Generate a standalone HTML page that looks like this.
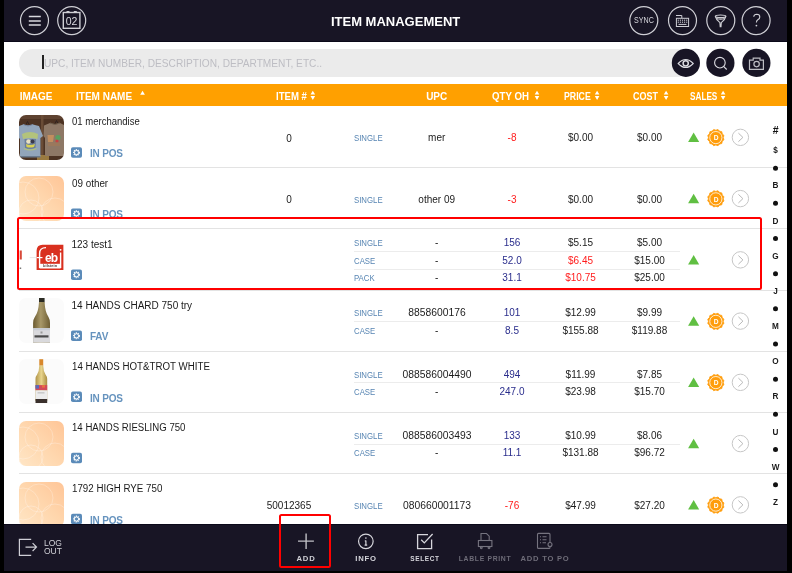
<!DOCTYPE html><html><head><meta charset="utf-8"><style>
*{margin:0;padding:0;box-sizing:border-box}
html,body{width:792px;height:573px;overflow:hidden;background:#000}
body{position:relative;font-family:"Liberation Sans",sans-serif}
.t{position:absolute;line-height:1;white-space:nowrap}
.a{position:absolute}
.sep{position:absolute;height:1px;background:#e3e3e3}
.thumb{position:absolute;left:19px;width:45px;height:45px;border-radius:7px;overflow:hidden}
.peach{background:linear-gradient(225deg,#ffc597 0%,#ffd7ae 50%,#ffe6c6 100%)}
svg.ov{position:absolute;left:0;top:0}
#wrap{position:absolute;left:0;top:0;width:792px;height:573px;will-change:transform}
</style></head><body><div id="wrap">
<div class="a" style="left:4px;top:0;width:783px;height:42px;background:#181525"></div>
<div class="a" style="left:4px;top:41px;width:783px;height:1px;background:#0b0919"></div>
<div class="a" style="left:4px;top:42px;width:783px;height:42px;background:#fff"></div>
<div class="a" style="left:4px;top:84px;width:783px;height:22px;background:#ffa000"></div>
<div class="a" style="left:4px;top:106px;width:783px;height:418px;background:#fff"></div>
<div class="t" style="left:-78.4px;width:300px;text-align:center;top:15.77px;font-size:10.5px;color:#dcdce2;font-weight:400;letter-spacing:0px;">02</div>
<div class="t" style="left:245.60000000000002px;width:300px;text-align:center;top:14.85px;font-size:13px;color:#fff;font-weight:700;letter-spacing:0px;">ITEM MANAGEMENT</div>
<div class="t" style="left:493.79999999999995px;width:300px;text-align:center;top:16.05px;font-size:8.3px;color:#d8d8de;font-weight:400;letter-spacing:0px;transform:scaleX(0.86);transform-origin:center center;">SYNC</div>
<div class="a" style="left:19px;top:49px;width:672px;height:28px;border-radius:14px;background:#ebebeb"></div>
<div class="a" style="left:42px;top:55px;width:2px;height:14px;background:#222"></div>
<div class="t" style="left:43.5px;top:59.07px;font-size:10.1px;color:#bdbdc3;font-weight:400;letter-spacing:0px;transform:scaleX(1.005);transform-origin:left center;">UPC, ITEM NUMBER, DESCRIPTION, DEPARTMENT, ETC..</div>
<div class="t" style="left:19.7px;top:91.61px;font-size:10px;color:#fff;font-weight:700;letter-spacing:0px;">IMAGE</div>
<div class="t" style="left:76px;top:91.61px;font-size:10px;color:#fff;font-weight:700;letter-spacing:0px;">ITEM NAME</div>
<div class="t" style="left:275.7px;top:91.61px;font-size:10px;color:#fff;font-weight:700;letter-spacing:0px;transform:scaleX(0.96);transform-origin:left center;">ITEM #</div>
<div class="t" style="left:286.7px;width:300px;text-align:center;top:91.61px;font-size:10px;color:#fff;font-weight:700;letter-spacing:0px;">UPC</div>
<div class="t" style="left:491.5px;top:91.61px;font-size:10px;color:#fff;font-weight:700;letter-spacing:0px;transform:scaleX(0.967);transform-origin:left center;">QTY OH</div>
<div class="t" style="left:563.9px;top:91.61px;font-size:10px;color:#fff;font-weight:700;letter-spacing:0px;transform:scaleX(0.874);transform-origin:left center;">PRICE</div>
<div class="t" style="left:633px;top:91.61px;font-size:10px;color:#fff;font-weight:700;letter-spacing:0px;transform:scaleX(0.9);transform-origin:left center;">COST</div>
<div class="t" style="left:689.6px;top:91.61px;font-size:10px;color:#fff;font-weight:700;letter-spacing:0px;transform:scaleX(0.82);transform-origin:left center;">SALES</div>
<div class="thumb" style="top:115.10px"><div style="filter:blur(0.45px)"><svg width="45" height="45" viewBox="0 0 45 45">
<rect width="45" height="45" fill="#4d3323"/>
<rect x="0" y="0" width="45" height="4" fill="#5e4230"/>
<rect x="22" y="0" width="2.5" height="45" fill="#6a4c36"/>
<rect x="18" y="40" width="12" height="5" fill="#9a7a40"/>
<path d="M7 9.5 L8.5 6.5 L10 9.5" fill="none" stroke="#2a2020" stroke-width="0.8"/>
<path d="M36 8.5 L37.5 5.5 L39 8.5" fill="none" stroke="#2a2020" stroke-width="0.8"/>
<path d="M0 11 L4 9.5 Q9 11.5 14 9.5 L20 11 L24 21 L21.5 23 V41.5 H1 V24 L0 23 Z" fill="#92a5bb"/>
<path d="M4 9.5 Q9 12.5 14 9.5" fill="none" stroke="#7a8ca8" stroke-width="1"/>
<path d="M2 41 H21.5 V42.5 H2 Z" fill="#6a7a8e"/>
<path d="M3 19 Q11 15 19 19 L18.5 24 Q11 22 4 24 Z" fill="#b8c870" opacity="0.85"/>
<path d="M5.5 24 L17 24 L16.5 33 Q11 35 6 33 Z" fill="#6d7f9c"/>
<circle cx="9.5" cy="26.5" r="2.3" fill="#e8e0c0"/>
<circle cx="13.5" cy="26.5" r="2" fill="#3a3a4a"/>
<path d="M7 29 Q11 31 16 29 L15 32 Q11 33 7.5 32 Z" fill="#d8d050"/>
<path d="M5 33.5 Q11 36.5 17.5 33.5" fill="none" stroke="#b8c870" stroke-width="1.2" opacity="0.8"/>
<path d="M25 10.5 L31 8 Q36 10.5 41 8 L45 10 V41 H26 V23 L24.5 21 Z" fill="#8e7866"/>
<path d="M31 8 Q36 11 41 8" fill="none" stroke="#70604e" stroke-width="1"/>
<path d="M28.5 20 L35 20 L34 27 L29 27 Z" fill="#c8905e" opacity="0.9"/>
<circle cx="39" cy="22.5" r="2.6" fill="#5aa060"/>
<circle cx="38" cy="26" r="1.6" fill="#c84040"/>
<path d="M29 27.5 H41 V31 H29 Z" fill="#a07858" opacity="0.7"/>
</svg></div></div>
<div class="t" style="left:71.5px;top:117.46px;font-size:10px;color:#1b1b1b;font-weight:400;letter-spacing:0px;transform:scaleX(0.952);transform-origin:left center;">01 merchandise</div>
<div class="t" style="left:90px;top:149.22px;font-size:10px;color:#6693be;font-weight:700;letter-spacing:-0.2px;">IN POS</div>
<div class="t" style="left:139px;width:300px;text-align:center;top:133.72px;font-size:10px;color:#1b1b1b;font-weight:400;letter-spacing:0px;">0</div>
<div class="t" style="left:354.2px;top:134.30px;font-size:8.3px;color:#5785b3;font-weight:400;letter-spacing:0px;transform:scaleX(0.94);transform-origin:left center;">SINGLE</div>
<div class="t" style="left:286.7px;width:300px;text-align:center;top:133.47px;font-size:10px;color:#1b1b1b;font-weight:400;letter-spacing:0px;">mer</div>
<div class="t" style="left:362px;width:300px;text-align:center;top:133.47px;font-size:10px;color:#ff1c1c;font-weight:400;letter-spacing:0px;">-8</div>
<div class="t" style="left:430.5px;width:300px;text-align:center;top:133.47px;font-size:10px;color:#1b1b1b;font-weight:400;letter-spacing:0px;">$0.00</div>
<div class="t" style="left:499.5px;width:300px;text-align:center;top:133.47px;font-size:10px;color:#1b1b1b;font-weight:400;letter-spacing:0px;">$0.00</div>
<div class="sep" style="left:19px;top:167.00px;width:768px"></div>
<div class="thumb peach" style="top:176.18px"><svg width="45" height="45" viewBox="0 0 45 45" fill="none" stroke="rgba(255,255,255,0.55)" stroke-width="0.5"><circle cx="20" cy="16" r="14"/><circle cx="36" cy="36" r="14"/><circle cx="12" cy="36" r="12"/><circle cx="4" cy="22" r="16"/></svg></div>
<div class="t" style="left:71.5px;top:178.55px;font-size:10px;color:#1b1b1b;font-weight:400;letter-spacing:0px;transform:scaleX(0.985);transform-origin:left center;">09 other</div>
<div class="t" style="left:90px;top:210.30px;font-size:10px;color:#6693be;font-weight:700;letter-spacing:-0.2px;">IN POS</div>
<div class="t" style="left:139px;width:300px;text-align:center;top:194.97px;font-size:10px;color:#1b1b1b;font-weight:400;letter-spacing:0px;">0</div>
<div class="t" style="left:354.2px;top:195.55px;font-size:8.3px;color:#5785b3;font-weight:400;letter-spacing:0px;transform:scaleX(0.94);transform-origin:left center;">SINGLE</div>
<div class="t" style="left:286.7px;width:300px;text-align:center;top:194.72px;font-size:10px;color:#1b1b1b;font-weight:400;letter-spacing:0px;">other 09</div>
<div class="t" style="left:362px;width:300px;text-align:center;top:194.72px;font-size:10px;color:#ff1c1c;font-weight:400;letter-spacing:0px;">-3</div>
<div class="t" style="left:430.5px;width:300px;text-align:center;top:194.72px;font-size:10px;color:#1b1b1b;font-weight:400;letter-spacing:0px;">$0.00</div>
<div class="t" style="left:499.5px;width:300px;text-align:center;top:194.72px;font-size:10px;color:#1b1b1b;font-weight:400;letter-spacing:0px;">$0.00</div>
<div class="sep" style="left:19px;top:228.25px;width:768px"></div>
<div class="thumb" style="top:237.26px;border-radius:0"><svg width="45" height="45" viewBox="0 0 45 45">
<rect width="45" height="45" fill="#fff"/>
<rect x="0.7" y="13.5" width="2.1" height="9" fill="#d84a3a"/>
<rect x="0.7" y="30.5" width="1.5" height="1.5" fill="#777"/>
<path d="M10.7 20.6 H19" stroke="#dcdcdc" stroke-width="0.7"/>
<path d="M23.6 7.85 H44.4 V33 H17.6 V13.85 Q17.6 7.85 23.6 7.85 Z" fill="#d9301f"/>
<path d="M20.6 31 V16.5 Q20.6 10.6 27 10.6" fill="none" stroke="#fff" stroke-width="1.4"/>
<path d="M17.6 20.6 H23.5" stroke="#fff" stroke-width="1.2"/>
<text x="32.2" y="24.6" font-family="Liberation Sans" font-weight="700" font-size="12" fill="#fff" text-anchor="middle" letter-spacing="-0.8">eb</text>
<path d="M41.6 15.5 V31" stroke="#fff" stroke-width="1.4"/>
<circle cx="41.6" cy="12.8" r="0.9" fill="#fff"/>
<rect x="20.6" y="26.8" width="21" height="4.2" fill="#fff"/>
<text x="31.1" y="30.3" font-family="Liberation Sans" font-weight="700" font-size="4" fill="#5a4040" text-anchor="middle">bilstein</text>
<path d="M20.6 31 H41.6" stroke="#fff" stroke-width="1"/>
</svg></div>
<div class="t" style="left:71.5px;top:239.62px;font-size:10px;color:#1b1b1b;font-weight:400;letter-spacing:0px;transform:scaleX(1.0);transform-origin:left center;">123 test1</div>
<div class="t" style="left:354.2px;top:239.30px;font-size:8.3px;color:#5785b3;font-weight:400;letter-spacing:0px;transform:scaleX(0.94);transform-origin:left center;">SINGLE</div>
<div class="t" style="left:286.7px;width:300px;text-align:center;top:238.47px;font-size:10px;color:#1b1b1b;font-weight:400;letter-spacing:0px;">-</div>
<div class="t" style="left:362px;width:300px;text-align:center;top:238.47px;font-size:10px;color:#2a2d8c;font-weight:400;letter-spacing:0px;">156</div>
<div class="t" style="left:430.5px;width:300px;text-align:center;top:238.47px;font-size:10px;color:#1b1b1b;font-weight:400;letter-spacing:0px;">$5.15</div>
<div class="t" style="left:499.5px;width:300px;text-align:center;top:238.47px;font-size:10px;color:#1b1b1b;font-weight:400;letter-spacing:0px;">$5.00</div>
<div class="t" style="left:354.2px;top:256.80px;font-size:8.3px;color:#5785b3;font-weight:400;letter-spacing:0px;transform:scaleX(0.94);transform-origin:left center;">CASE</div>
<div class="t" style="left:286.7px;width:300px;text-align:center;top:255.97px;font-size:10px;color:#1b1b1b;font-weight:400;letter-spacing:0px;">-</div>
<div class="t" style="left:362px;width:300px;text-align:center;top:255.97px;font-size:10px;color:#2a2d8c;font-weight:400;letter-spacing:0px;">52.0</div>
<div class="t" style="left:430.5px;width:300px;text-align:center;top:255.97px;font-size:10px;color:#ff1c1c;font-weight:400;letter-spacing:0px;">$6.45</div>
<div class="t" style="left:499.5px;width:300px;text-align:center;top:255.97px;font-size:10px;color:#1b1b1b;font-weight:400;letter-spacing:0px;">$15.00</div>
<div class="t" style="left:354.2px;top:274.30px;font-size:8.3px;color:#5785b3;font-weight:400;letter-spacing:0px;transform:scaleX(0.94);transform-origin:left center;">PACK</div>
<div class="t" style="left:286.7px;width:300px;text-align:center;top:273.47px;font-size:10px;color:#1b1b1b;font-weight:400;letter-spacing:0px;">-</div>
<div class="t" style="left:362px;width:300px;text-align:center;top:273.47px;font-size:10px;color:#2a2d8c;font-weight:400;letter-spacing:0px;">31.1</div>
<div class="t" style="left:430.5px;width:300px;text-align:center;top:273.47px;font-size:10px;color:#ff1c1c;font-weight:400;letter-spacing:0px;">$10.75</div>
<div class="t" style="left:499.5px;width:300px;text-align:center;top:273.47px;font-size:10px;color:#1b1b1b;font-weight:400;letter-spacing:0px;">$25.00</div>
<div class="sep" style="left:354px;top:251.00px;width:326px;background:#ececec"></div>
<div class="sep" style="left:354px;top:268.50px;width:326px;background:#ececec"></div>
<div class="sep" style="left:19px;top:289.50px;width:768px"></div>
<div class="thumb" style="top:298.34px"><svg width="45" height="45" viewBox="0 0 45 45">
<rect width="45" height="45" fill="#fbfbfb"/>
<defs><linearGradient id="b1" x1="0" x2="1"><stop offset="0" stop-color="#6a5a30"/><stop offset="0.45" stop-color="#a89868"/><stop offset="1" stop-color="#6e5e34"/></linearGradient></defs>
<rect x="20" y="0" width="5.6" height="4.3" fill="#2b2b24"/>
<path d="M20 4 H25.6 Q26 14 29.5 19 Q31 21.5 31 25 V44.5 H14.1 V25 Q14.1 21.5 15.8 19 Q19.5 14 20 4 Z" fill="url(#b1)"/>
<rect x="14.1" y="30.2" width="16.9" height="14.3" fill="#d9d9dc"/>
<rect x="14.1" y="30.2" width="16.9" height="2" fill="#c8ccd4"/>
<rect x="15.5" y="37.3" width="14" height="2.2" fill="#4a4a4a"/>
<rect x="21.5" y="33.5" width="2" height="2" fill="#999"/>
</svg></div>
<div class="t" style="left:71.5px;top:300.71px;font-size:10px;color:#1b1b1b;font-weight:400;letter-spacing:0px;transform:scaleX(1.0);transform-origin:left center;">14 HANDS CHARD 750 try</div>
<div class="t" style="left:90px;top:332.46px;font-size:10px;color:#6693be;font-weight:700;letter-spacing:-0.2px;">FAV</div>
<div class="t" style="left:354.2px;top:309.30px;font-size:8.3px;color:#5785b3;font-weight:400;letter-spacing:0px;transform:scaleX(0.94);transform-origin:left center;">SINGLE</div>
<div class="t" style="left:286.7px;width:300px;text-align:center;top:308.47px;font-size:10px;color:#1b1b1b;font-weight:400;letter-spacing:0px;transform:scaleX(1.03);transform-origin:center center;">8858600176</div>
<div class="t" style="left:362px;width:300px;text-align:center;top:308.47px;font-size:10px;color:#2a2d8c;font-weight:400;letter-spacing:0px;">101</div>
<div class="t" style="left:430.5px;width:300px;text-align:center;top:308.47px;font-size:10px;color:#1b1b1b;font-weight:400;letter-spacing:0px;">$12.99</div>
<div class="t" style="left:499.5px;width:300px;text-align:center;top:308.47px;font-size:10px;color:#1b1b1b;font-weight:400;letter-spacing:0px;">$9.99</div>
<div class="t" style="left:354.2px;top:326.80px;font-size:8.3px;color:#5785b3;font-weight:400;letter-spacing:0px;transform:scaleX(0.94);transform-origin:left center;">CASE</div>
<div class="t" style="left:286.7px;width:300px;text-align:center;top:325.97px;font-size:10px;color:#1b1b1b;font-weight:400;letter-spacing:0px;">-</div>
<div class="t" style="left:362px;width:300px;text-align:center;top:325.97px;font-size:10px;color:#2a2d8c;font-weight:400;letter-spacing:0px;">8.5</div>
<div class="t" style="left:430.5px;width:300px;text-align:center;top:325.97px;font-size:10px;color:#1b1b1b;font-weight:400;letter-spacing:0px;">$155.88</div>
<div class="t" style="left:499.5px;width:300px;text-align:center;top:325.97px;font-size:10px;color:#1b1b1b;font-weight:400;letter-spacing:0px;">$119.88</div>
<div class="sep" style="left:354px;top:321.00px;width:326px;background:#ececec"></div>
<div class="sep" style="left:19px;top:350.75px;width:768px"></div>
<div class="thumb" style="top:359.42px"><svg width="45" height="45" viewBox="0 0 45 45">
<rect width="45" height="45" fill="#fbfbfb"/>
<defs><linearGradient id="b2" x1="0" x2="1"><stop offset="0" stop-color="#b09448"/><stop offset="0.5" stop-color="#e8d48c"/><stop offset="1" stop-color="#a88c40"/></linearGradient></defs>
<rect x="20.3" y="0.2" width="3.9" height="6.5" fill="#d8882c"/>
<path d="M20.3 6.5 H24.2 Q24.4 12 26.5 15.5 Q28.2 17.5 28.2 20 V42 H16.5 V20 Q16.5 17.5 18.1 15.5 Q20.2 12 20.3 6.5 Z" fill="url(#b2)"/>
<rect x="16.5" y="26.1" width="11.7" height="5.2" fill="#d24a5a"/>
<rect x="16.5" y="26.1" width="3.5" height="3.5" fill="#5a6ab8"/>
<rect x="23" y="26.1" width="3" height="2.5" fill="#e87040"/>
<rect x="16.5" y="31.3" width="11.7" height="8.7" fill="#ececec"/>
<rect x="18.5" y="33.5" width="7" height="0.8" fill="#aaa"/>
<rect x="16.5" y="40" width="11.7" height="4" fill="#3a302c"/>
</svg></div>
<div class="t" style="left:71.5px;top:361.79px;font-size:10px;color:#1b1b1b;font-weight:400;letter-spacing:0px;transform:scaleX(0.975);transform-origin:left center;">14 HANDS HOT&amp;TROT WHITE</div>
<div class="t" style="left:90px;top:393.54px;font-size:10px;color:#6693be;font-weight:700;letter-spacing:-0.2px;">IN POS</div>
<div class="t" style="left:354.2px;top:370.55px;font-size:8.3px;color:#5785b3;font-weight:400;letter-spacing:0px;transform:scaleX(0.94);transform-origin:left center;">SINGLE</div>
<div class="t" style="left:286.7px;width:300px;text-align:center;top:369.72px;font-size:10px;color:#1b1b1b;font-weight:400;letter-spacing:0px;transform:scaleX(1.03);transform-origin:center center;">088586004490</div>
<div class="t" style="left:362px;width:300px;text-align:center;top:369.72px;font-size:10px;color:#2a2d8c;font-weight:400;letter-spacing:0px;">494</div>
<div class="t" style="left:430.5px;width:300px;text-align:center;top:369.72px;font-size:10px;color:#1b1b1b;font-weight:400;letter-spacing:0px;">$11.99</div>
<div class="t" style="left:499.5px;width:300px;text-align:center;top:369.72px;font-size:10px;color:#1b1b1b;font-weight:400;letter-spacing:0px;">$7.85</div>
<div class="t" style="left:354.2px;top:388.05px;font-size:8.3px;color:#5785b3;font-weight:400;letter-spacing:0px;transform:scaleX(0.94);transform-origin:left center;">CASE</div>
<div class="t" style="left:286.7px;width:300px;text-align:center;top:387.22px;font-size:10px;color:#1b1b1b;font-weight:400;letter-spacing:0px;">-</div>
<div class="t" style="left:362px;width:300px;text-align:center;top:387.22px;font-size:10px;color:#2a2d8c;font-weight:400;letter-spacing:0px;">247.0</div>
<div class="t" style="left:430.5px;width:300px;text-align:center;top:387.22px;font-size:10px;color:#1b1b1b;font-weight:400;letter-spacing:0px;">$23.98</div>
<div class="t" style="left:499.5px;width:300px;text-align:center;top:387.22px;font-size:10px;color:#1b1b1b;font-weight:400;letter-spacing:0px;">$15.70</div>
<div class="sep" style="left:354px;top:382.25px;width:326px;background:#ececec"></div>
<div class="sep" style="left:19px;top:412.00px;width:768px"></div>
<div class="thumb peach" style="top:420.50px"><svg width="45" height="45" viewBox="0 0 45 45" fill="none" stroke="rgba(255,255,255,0.55)" stroke-width="0.5"><circle cx="20" cy="16" r="14"/><circle cx="36" cy="36" r="14"/><circle cx="12" cy="36" r="12"/><circle cx="4" cy="22" r="16"/></svg></div>
<div class="t" style="left:71.5px;top:422.87px;font-size:10px;color:#1b1b1b;font-weight:400;letter-spacing:0px;transform:scaleX(0.963);transform-origin:left center;">14 HANDS RIESLING 750</div>
<div class="t" style="left:354.2px;top:431.80px;font-size:8.3px;color:#5785b3;font-weight:400;letter-spacing:0px;transform:scaleX(0.94);transform-origin:left center;">SINGLE</div>
<div class="t" style="left:286.7px;width:300px;text-align:center;top:430.97px;font-size:10px;color:#1b1b1b;font-weight:400;letter-spacing:0px;transform:scaleX(1.03);transform-origin:center center;">088586003493</div>
<div class="t" style="left:362px;width:300px;text-align:center;top:430.97px;font-size:10px;color:#2a2d8c;font-weight:400;letter-spacing:0px;">133</div>
<div class="t" style="left:430.5px;width:300px;text-align:center;top:430.97px;font-size:10px;color:#1b1b1b;font-weight:400;letter-spacing:0px;">$10.99</div>
<div class="t" style="left:499.5px;width:300px;text-align:center;top:430.97px;font-size:10px;color:#1b1b1b;font-weight:400;letter-spacing:0px;">$8.06</div>
<div class="t" style="left:354.2px;top:449.30px;font-size:8.3px;color:#5785b3;font-weight:400;letter-spacing:0px;transform:scaleX(0.94);transform-origin:left center;">CASE</div>
<div class="t" style="left:286.7px;width:300px;text-align:center;top:448.47px;font-size:10px;color:#1b1b1b;font-weight:400;letter-spacing:0px;">-</div>
<div class="t" style="left:362px;width:300px;text-align:center;top:448.47px;font-size:10px;color:#2a2d8c;font-weight:400;letter-spacing:0px;">11.1</div>
<div class="t" style="left:430.5px;width:300px;text-align:center;top:448.47px;font-size:10px;color:#1b1b1b;font-weight:400;letter-spacing:0px;">$131.88</div>
<div class="t" style="left:499.5px;width:300px;text-align:center;top:448.47px;font-size:10px;color:#1b1b1b;font-weight:400;letter-spacing:0px;">$96.72</div>
<div class="sep" style="left:354px;top:443.50px;width:326px;background:#ececec"></div>
<div class="sep" style="left:19px;top:473.25px;width:768px"></div>
<div class="thumb peach" style="top:481.58px"><svg width="45" height="45" viewBox="0 0 45 45" fill="none" stroke="rgba(255,255,255,0.55)" stroke-width="0.5"><circle cx="20" cy="16" r="14"/><circle cx="36" cy="36" r="14"/><circle cx="12" cy="36" r="12"/><circle cx="4" cy="22" r="16"/></svg></div>
<div class="t" style="left:71.5px;top:483.95px;font-size:10px;color:#1b1b1b;font-weight:400;letter-spacing:0px;transform:scaleX(0.975);transform-origin:left center;">1792 HIGH RYE 750</div>
<div class="t" style="left:90px;top:515.70px;font-size:10px;color:#6693be;font-weight:700;letter-spacing:-0.2px;">IN POS</div>
<div class="t" style="left:139px;width:300px;text-align:center;top:501.22px;font-size:10px;color:#1b1b1b;font-weight:400;letter-spacing:0px;">50012365</div>
<div class="t" style="left:354.2px;top:501.80px;font-size:8.3px;color:#5785b3;font-weight:400;letter-spacing:0px;transform:scaleX(0.94);transform-origin:left center;">SINGLE</div>
<div class="t" style="left:286.7px;width:300px;text-align:center;top:500.97px;font-size:10px;color:#1b1b1b;font-weight:400;letter-spacing:0px;transform:scaleX(1.03);transform-origin:center center;">080660001173</div>
<div class="t" style="left:362px;width:300px;text-align:center;top:500.97px;font-size:10px;color:#ff1c1c;font-weight:400;letter-spacing:0px;">-76</div>
<div class="t" style="left:430.5px;width:300px;text-align:center;top:500.97px;font-size:10px;color:#1b1b1b;font-weight:400;letter-spacing:0px;">$47.99</div>
<div class="t" style="left:499.5px;width:300px;text-align:center;top:500.97px;font-size:10px;color:#1b1b1b;font-weight:400;letter-spacing:0px;">$27.20</div>
<div class="sep" style="left:19px;top:534.50px;width:768px"></div>
<div class="t" style="left:625.6px;width:300px;text-align:center;top:125.27px;font-size:10.5px;color:#111;font-weight:700;letter-spacing:0px;">#</div>
<div class="t" style="left:625.5px;width:300px;text-align:center;top:147.31px;font-size:8.2px;color:#1a1a1a;font-weight:700;letter-spacing:0px;">$</div>
<div class="t" style="left:625.5px;width:300px;text-align:center;top:182.47px;font-size:8.2px;color:#1a1a1a;font-weight:700;letter-spacing:0px;">B</div>
<div class="t" style="left:625.5px;width:300px;text-align:center;top:217.63px;font-size:8.2px;color:#1a1a1a;font-weight:700;letter-spacing:0px;">D</div>
<div class="t" style="left:625.5px;width:300px;text-align:center;top:252.79px;font-size:8.2px;color:#1a1a1a;font-weight:700;letter-spacing:0px;">G</div>
<div class="t" style="left:625.5px;width:300px;text-align:center;top:287.95px;font-size:8.2px;color:#1a1a1a;font-weight:700;letter-spacing:0px;">J</div>
<div class="t" style="left:625.5px;width:300px;text-align:center;top:323.11px;font-size:8.2px;color:#1a1a1a;font-weight:700;letter-spacing:0px;">M</div>
<div class="t" style="left:625.5px;width:300px;text-align:center;top:358.27px;font-size:8.2px;color:#1a1a1a;font-weight:700;letter-spacing:0px;">O</div>
<div class="t" style="left:625.5px;width:300px;text-align:center;top:393.43px;font-size:8.2px;color:#1a1a1a;font-weight:700;letter-spacing:0px;">R</div>
<div class="t" style="left:625.5px;width:300px;text-align:center;top:428.59px;font-size:8.2px;color:#1a1a1a;font-weight:700;letter-spacing:0px;">U</div>
<div class="t" style="left:625.5px;width:300px;text-align:center;top:463.75px;font-size:8.2px;color:#1a1a1a;font-weight:700;letter-spacing:0px;">W</div>
<div class="t" style="left:625.5px;width:300px;text-align:center;top:498.91px;font-size:8.2px;color:#1a1a1a;font-weight:700;letter-spacing:0px;">Z</div>
<svg class="ov" width="792" height="573" viewBox="0 0 792 573"><circle cx="34.5" cy="20.6" r="14" fill="none" stroke="#cfcfd5" stroke-width="1.2"/><circle cx="71.7" cy="20.6" r="14" fill="none" stroke="#cfcfd5" stroke-width="1.2"/><circle cx="643.8" cy="20.6" r="14" fill="none" stroke="#cfcfd5" stroke-width="1.2"/><circle cx="682.5" cy="20.6" r="14" fill="none" stroke="#cfcfd5" stroke-width="1.2"/><circle cx="720.8" cy="20.6" r="14" fill="none" stroke="#cfcfd5" stroke-width="1.2"/><circle cx="756.1" cy="20.6" r="14" fill="none" stroke="#cfcfd5" stroke-width="1.2"/><path d="M28.8 16.4H40.8M28.8 20.9H40.8M28.8 25.1H40.8" stroke="#d8d8de" stroke-width="1.5"/><rect x="63.3" y="12.5" width="16.6" height="15.8" fill="none" stroke="#cfcfd5" stroke-width="1.4"/><path d="M66.5 11.6H69.5M73.8 11.6H76.8" stroke="#cfcfd5" stroke-width="1.2"/><g fill="none" stroke="#cfcfd5" stroke-width="1"><path d="M676 15.5H681.8V18"/><rect x="676.4" y="18.3" width="12.2" height="8.2"/></g><rect x="677.75" y="19.65" width="1.1" height="1.1" fill="#cfcfd5"/><rect x="679.85" y="19.65" width="1.1" height="1.1" fill="#cfcfd5"/><rect x="681.95" y="19.65" width="1.1" height="1.1" fill="#cfcfd5"/><rect x="684.0500000000001" y="19.65" width="1.1" height="1.1" fill="#cfcfd5"/><rect x="686.1500000000001" y="19.65" width="1.1" height="1.1" fill="#cfcfd5"/><rect x="677.75" y="21.65" width="1.1" height="1.1" fill="#cfcfd5"/><rect x="679.85" y="21.65" width="1.1" height="1.1" fill="#cfcfd5"/><rect x="681.95" y="21.65" width="1.1" height="1.1" fill="#cfcfd5"/><rect x="684.0500000000001" y="21.65" width="1.1" height="1.1" fill="#cfcfd5"/><rect x="686.1500000000001" y="21.65" width="1.1" height="1.1" fill="#cfcfd5"/><path d="M678.5 24.4H686.5" stroke="#cfcfd5" stroke-width="1"/><g fill="none" stroke="#cfcfd5" stroke-width="1.1"><ellipse cx="720.6" cy="16.3" rx="5.3" ry="1.3"/><path d="M715.3 16.3 Q716 19.5 719.9 22.6 L720.2 26.6 L721 26.6 L721.3 22.6 Q725.2 19.5 725.9 16.3"/><path d="M716.6 18.4 Q720.6 19.8 724.6 18.4"/></g><g fill="none" stroke="#cfcfd5" stroke-width="1.1"><path d="M753.7 16.8 Q754 14.2 756.8 14.2 Q759.8 14.3 759.8 16.9 Q759.8 18.7 757.8 19.8 Q756.4 20.6 756.4 22.6"/></g><circle cx="756.4" cy="25.6" r="0.9" fill="#cfcfd5"/><circle cx="685.9" cy="62.9" r="14.1" fill="#181525"/><circle cx="720.4" cy="62.9" r="14.1" fill="#181525"/><circle cx="756.4" cy="62.9" r="14.1" fill="#181525"/><g fill="none" stroke="#dcdce2" stroke-width="1.1"><path d="M678.2 63.5 Q685.7 55.5 693.2 63.5 Q685.7 71.5 678.2 63.5 Z"/><circle cx="685.7" cy="63.3" r="2.6" stroke-width="1.5"/></g><g fill="none" stroke="#dcdce2" stroke-width="1.1"><circle cx="719.9" cy="62.7" r="5.3"/><path d="M723.6 66.4 L726.7 69.5"/></g><g fill="none" stroke="#bdbdc3" stroke-width="1.2"><path d="M749.5 60.2 H753.2 V58.1 H760 V60.2 H763.4 V69.3 H749.5 Z"/><circle cx="756.6" cy="64.1" r="2.7"/></g><path d="M140.2 94.8 L142.55 90.7 L144.9 94.8 Z" fill="#fff"/><path d="M310.5 94.5 L312.8 90.7 L315.1 94.5 Z M310.5 96.1 L312.8 99.9 L315.1 96.1 Z" fill="#fff"/><path d="M534.7 94.5 L537.0 90.7 L539.3000000000001 94.5 Z M534.7 96.1 L537.0 99.9 L539.3000000000001 96.1 Z" fill="#fff"/><path d="M594.8 94.5 L597.0999999999999 90.7 L599.4 94.5 Z M594.8 96.1 L597.0999999999999 99.9 L599.4 96.1 Z" fill="#fff"/><path d="M663.8 94.5 L666.0999999999999 90.7 L668.4 94.5 Z M663.8 96.1 L666.0999999999999 99.9 L668.4 96.1 Z" fill="#fff"/><path d="M720.8 94.5 L723.0999999999999 90.7 L725.4 94.5 Z M720.8 96.1 L723.0999999999999 99.9 L725.4 96.1 Z" fill="#fff"/><rect x="71" y="147.30" width="11" height="10.5" rx="1.8" fill="#5b8bb9"/><circle cx="76.5" cy="152.55" r="2.7" fill="none" stroke="#fff" stroke-width="1.5" stroke-dasharray="1.1 0.85"/><circle cx="76.5" cy="152.55" r="2.1" fill="none" stroke="#fff" stroke-width="0.9"/><path d="M688.1 142.10 L693.65 132.60 L699.2 142.10 Z" fill="#60bf42"/><path d="M718.02 129.49 719.55 131.19 721.79 131.66 722.26 133.90 723.96 135.43 723.25 137.60 723.96 139.77 722.26 141.30 721.79 143.54 719.55 144.01 718.02 145.71 715.85 145.00 713.68 145.71 712.15 144.01 709.91 143.54 709.44 141.30 707.74 139.77 708.45 137.60 707.74 135.43 709.44 133.90 709.91 131.66 712.15 131.19 713.68 129.49 715.85 130.20Z" fill="#ff9d0c" stroke="#ff9d0c" stroke-width="0.8" stroke-linejoin="round"/><circle cx="715.85" cy="137.60" r="6.1" fill="none" stroke="#fff" stroke-width="0.8"/><text x="716.0500000000001" y="140.30" font-family="Liberation Sans" font-weight="700" font-size="7.4" fill="#fff" text-anchor="middle" transform="translate(716.0500000000001 140.30) scale(0.9 1.05) translate(-716.0500000000001 -140.30)">D</text><circle cx="740.4" cy="137.35" r="8.2" fill="none" stroke="#c6c6c6" stroke-width="1"/><path d="M738.4 133.10 L742.9 137.40 L738.4 141.70" fill="none" stroke="#b8b8b8" stroke-width="1"/><rect x="71" y="208.38" width="11" height="10.5" rx="1.8" fill="#5b8bb9"/><circle cx="76.5" cy="213.63" r="2.7" fill="none" stroke="#fff" stroke-width="1.5" stroke-dasharray="1.1 0.85"/><circle cx="76.5" cy="213.63" r="2.1" fill="none" stroke="#fff" stroke-width="0.9"/><path d="M688.1 203.35 L693.65 193.85 L699.2 203.35 Z" fill="#60bf42"/><path d="M718.02 190.74 719.55 192.44 721.79 192.91 722.26 195.15 723.96 196.68 723.25 198.85 723.96 201.02 722.26 202.55 721.79 204.79 719.55 205.26 718.02 206.96 715.85 206.25 713.68 206.96 712.15 205.26 709.91 204.79 709.44 202.55 707.74 201.02 708.45 198.85 707.74 196.68 709.44 195.15 709.91 192.91 712.15 192.44 713.68 190.74 715.85 191.45Z" fill="#ff9d0c" stroke="#ff9d0c" stroke-width="0.8" stroke-linejoin="round"/><circle cx="715.85" cy="198.85" r="6.1" fill="none" stroke="#fff" stroke-width="0.8"/><text x="716.0500000000001" y="201.55" font-family="Liberation Sans" font-weight="700" font-size="7.4" fill="#fff" text-anchor="middle" transform="translate(716.0500000000001 201.55) scale(0.9 1.05) translate(-716.0500000000001 -201.55)">D</text><circle cx="740.4" cy="198.60" r="8.2" fill="none" stroke="#c6c6c6" stroke-width="1"/><path d="M738.4 194.35 L742.9 198.65 L738.4 202.95" fill="none" stroke="#b8b8b8" stroke-width="1"/><rect x="71" y="269.46" width="11" height="10.5" rx="1.8" fill="#5b8bb9"/><circle cx="76.5" cy="274.71" r="2.7" fill="none" stroke="#fff" stroke-width="1.5" stroke-dasharray="1.1 0.85"/><circle cx="76.5" cy="274.71" r="2.1" fill="none" stroke="#fff" stroke-width="0.9"/><path d="M688.1 264.60 L693.65 255.10 L699.2 264.60 Z" fill="#60bf42"/><circle cx="740.4" cy="259.85" r="8.2" fill="none" stroke="#c6c6c6" stroke-width="1"/><path d="M738.4 255.60 L742.9 259.90 L738.4 264.20" fill="none" stroke="#b8b8b8" stroke-width="1"/><rect x="71" y="330.54" width="11" height="10.5" rx="1.8" fill="#5b8bb9"/><circle cx="76.5" cy="335.79" r="2.7" fill="none" stroke="#fff" stroke-width="1.5" stroke-dasharray="1.1 0.85"/><circle cx="76.5" cy="335.79" r="2.1" fill="none" stroke="#fff" stroke-width="0.9"/><path d="M688.1 325.85 L693.65 316.35 L699.2 325.85 Z" fill="#60bf42"/><path d="M718.02 313.24 719.55 314.94 721.79 315.41 722.26 317.65 723.96 319.18 723.25 321.35 723.96 323.52 722.26 325.05 721.79 327.29 719.55 327.76 718.02 329.46 715.85 328.75 713.68 329.46 712.15 327.76 709.91 327.29 709.44 325.05 707.74 323.52 708.45 321.35 707.74 319.18 709.44 317.65 709.91 315.41 712.15 314.94 713.68 313.24 715.85 313.95Z" fill="#ff9d0c" stroke="#ff9d0c" stroke-width="0.8" stroke-linejoin="round"/><circle cx="715.85" cy="321.35" r="6.1" fill="none" stroke="#fff" stroke-width="0.8"/><text x="716.0500000000001" y="324.05" font-family="Liberation Sans" font-weight="700" font-size="7.4" fill="#fff" text-anchor="middle" transform="translate(716.0500000000001 324.05) scale(0.9 1.05) translate(-716.0500000000001 -324.05)">D</text><circle cx="740.4" cy="321.10" r="8.2" fill="none" stroke="#c6c6c6" stroke-width="1"/><path d="M738.4 316.85 L742.9 321.15 L738.4 325.45" fill="none" stroke="#b8b8b8" stroke-width="1"/><rect x="71" y="391.62" width="11" height="10.5" rx="1.8" fill="#5b8bb9"/><circle cx="76.5" cy="396.87" r="2.7" fill="none" stroke="#fff" stroke-width="1.5" stroke-dasharray="1.1 0.85"/><circle cx="76.5" cy="396.87" r="2.1" fill="none" stroke="#fff" stroke-width="0.9"/><path d="M688.1 387.10 L693.65 377.60 L699.2 387.10 Z" fill="#60bf42"/><path d="M718.02 374.49 719.55 376.19 721.79 376.66 722.26 378.90 723.96 380.43 723.25 382.60 723.96 384.77 722.26 386.30 721.79 388.54 719.55 389.01 718.02 390.71 715.85 390.00 713.68 390.71 712.15 389.01 709.91 388.54 709.44 386.30 707.74 384.77 708.45 382.60 707.74 380.43 709.44 378.90 709.91 376.66 712.15 376.19 713.68 374.49 715.85 375.20Z" fill="#ff9d0c" stroke="#ff9d0c" stroke-width="0.8" stroke-linejoin="round"/><circle cx="715.85" cy="382.60" r="6.1" fill="none" stroke="#fff" stroke-width="0.8"/><text x="716.0500000000001" y="385.30" font-family="Liberation Sans" font-weight="700" font-size="7.4" fill="#fff" text-anchor="middle" transform="translate(716.0500000000001 385.30) scale(0.9 1.05) translate(-716.0500000000001 -385.30)">D</text><circle cx="740.4" cy="382.35" r="8.2" fill="none" stroke="#c6c6c6" stroke-width="1"/><path d="M738.4 378.10 L742.9 382.40 L738.4 386.70" fill="none" stroke="#b8b8b8" stroke-width="1"/><rect x="71" y="452.70" width="11" height="10.5" rx="1.8" fill="#5b8bb9"/><circle cx="76.5" cy="457.95" r="2.7" fill="none" stroke="#fff" stroke-width="1.5" stroke-dasharray="1.1 0.85"/><circle cx="76.5" cy="457.95" r="2.1" fill="none" stroke="#fff" stroke-width="0.9"/><path d="M688.1 448.35 L693.65 438.85 L699.2 448.35 Z" fill="#60bf42"/><circle cx="740.4" cy="443.60" r="8.2" fill="none" stroke="#c6c6c6" stroke-width="1"/><path d="M738.4 439.35 L742.9 443.65 L738.4 447.95" fill="none" stroke="#b8b8b8" stroke-width="1"/><rect x="71" y="513.78" width="11" height="10.5" rx="1.8" fill="#5b8bb9"/><circle cx="76.5" cy="519.03" r="2.7" fill="none" stroke="#fff" stroke-width="1.5" stroke-dasharray="1.1 0.85"/><circle cx="76.5" cy="519.03" r="2.1" fill="none" stroke="#fff" stroke-width="0.9"/><path d="M688.1 509.60 L693.65 500.10 L699.2 509.60 Z" fill="#60bf42"/><path d="M718.02 496.99 719.55 498.69 721.79 499.16 722.26 501.40 723.96 502.93 723.25 505.10 723.96 507.27 722.26 508.80 721.79 511.04 719.55 511.51 718.02 513.21 715.85 512.50 713.68 513.21 712.15 511.51 709.91 511.04 709.44 508.80 707.74 507.27 708.45 505.10 707.74 502.93 709.44 501.40 709.91 499.16 712.15 498.69 713.68 496.99 715.85 497.70Z" fill="#ff9d0c" stroke="#ff9d0c" stroke-width="0.8" stroke-linejoin="round"/><circle cx="715.85" cy="505.10" r="6.1" fill="none" stroke="#fff" stroke-width="0.8"/><text x="716.0500000000001" y="507.80" font-family="Liberation Sans" font-weight="700" font-size="7.4" fill="#fff" text-anchor="middle" transform="translate(716.0500000000001 507.80) scale(0.9 1.05) translate(-716.0500000000001 -507.80)">D</text><circle cx="740.4" cy="504.85" r="8.2" fill="none" stroke="#c6c6c6" stroke-width="1"/><path d="M738.4 500.60 L742.9 504.90 L738.4 509.20" fill="none" stroke="#b8b8b8" stroke-width="1"/><circle cx="775.5" cy="168.20" r="2.5" fill="#111"/><circle cx="775.5" cy="203.36" r="2.5" fill="#111"/><circle cx="775.5" cy="238.52" r="2.5" fill="#111"/><circle cx="775.5" cy="273.68" r="2.5" fill="#111"/><circle cx="775.5" cy="308.84" r="2.5" fill="#111"/><circle cx="775.5" cy="344.00" r="2.5" fill="#111"/><circle cx="775.5" cy="379.16" r="2.5" fill="#111"/><circle cx="775.5" cy="414.32" r="2.5" fill="#111"/><circle cx="775.5" cy="449.48" r="2.5" fill="#111"/><circle cx="775.5" cy="484.64" r="2.5" fill="#111"/></svg>
<div class="a" style="left:4px;top:523.5px;width:783px;height:47.1px;background:#181525;border-top:1px solid #0b0919"></div>
<div class="t" style="left:44px;top:539.05px;font-size:8.5px;color:#d0d0d6;font-weight:400;letter-spacing:0px;">LOG</div>
<div class="t" style="left:44px;top:547.35px;font-size:8.5px;color:#d0d0d6;font-weight:400;letter-spacing:0px;">OUT</div>
<div class="t" style="left:156.3px;width:300px;text-align:center;top:554.88px;font-size:7.2px;color:#cfcfd5;font-weight:700;letter-spacing:0.7px;transform:scaleX(1.07);transform-origin:center center;">ADD</div>
<div class="t" style="left:215.60000000000002px;width:300px;text-align:center;top:554.88px;font-size:7.2px;color:#d6d6dc;font-weight:700;letter-spacing:0.7px;transform:scaleX(1.07);transform-origin:center center;">INFO</div>
<div class="t" style="left:274.9px;width:300px;text-align:center;top:554.88px;font-size:7.2px;color:#d6d6dc;font-weight:700;letter-spacing:0.7px;transform:scaleX(0.9);transform-origin:center center;">SELECT</div>
<div class="t" style="left:334.7px;width:300px;text-align:center;top:554.88px;font-size:7.2px;color:#6e6c78;font-weight:700;letter-spacing:0.7px;transform:scaleX(0.95);transform-origin:center center;">LABLE PRINT</div>
<div class="t" style="left:394.79999999999995px;width:300px;text-align:center;top:554.88px;font-size:7.2px;color:#6e6c78;font-weight:700;letter-spacing:0.7px;transform:scaleX(1.06);transform-origin:center center;">ADD TO PO</div>
<svg class="ov" width="792" height="573" viewBox="0 0 792 573"><g fill="none" stroke="#cfcfd6" stroke-width="1.2"><path d="M31.2 539.3 H19.4 V555.3 H31.2"/><path d="M25.5 547.1 H36.5 M32.6 543.2 L36.5 547.1 L32.6 551"/></g><path d="M306.1 533.5 V549 M298 541.1 H313.9" stroke="#c0c0c6" stroke-width="1.4"/><circle cx="365.85" cy="541.35" r="7.3" fill="none" stroke="#d6d6dc" stroke-width="1.2"/><path d="M365.9 540.5 V545.2 M364.6 545.2 H367.2 M364.8 540.9 H365.9" fill="none" stroke="#d6d6dc" stroke-width="1.2"/><circle cx="365.9" cy="538.1" r="0.8" fill="#d6d6dc"/><g fill="none" stroke="#d6d6dc" stroke-width="1.3"><path d="M431.6 539.5 V548.6 H417.6 V534.6 H428"/><path d="M421.2 539.8 L424.3 542.9 L432.6 534"/></g><g fill="none" stroke="#75737f" stroke-width="1.1"><path d="M481 540.5 V533.5 H486.5 L489.2 536.2 V540.5"/><rect x="478.4" y="540.5" width="13.5" height="6"/><circle cx="481.3" cy="547.8" r="0.9"/><circle cx="489" cy="547.8" r="0.9"/></g><g fill="none" stroke="#75737f" stroke-width="1.1"><rect x="537.5" y="533.4" width="12.5" height="15" rx="1"/><path d="M540 536.8H541M542.5 536.8H546.5M540 539.8H541M542.5 539.8H546.5M540 542.8H541M542.5 542.8H546"/><circle cx="550" cy="544.5" r="2" fill="#181525"/></g></svg>
<div class="a" style="left:17px;top:217px;width:744.5px;height:72.8px;border:2.9px solid #ff0000;border-radius:2.5px"></div>
<div class="a" style="left:279px;top:514px;width:52.1px;height:53.9px;border:2.9px solid #ff0000;border-radius:2.5px"></div>
</div></body></html>
